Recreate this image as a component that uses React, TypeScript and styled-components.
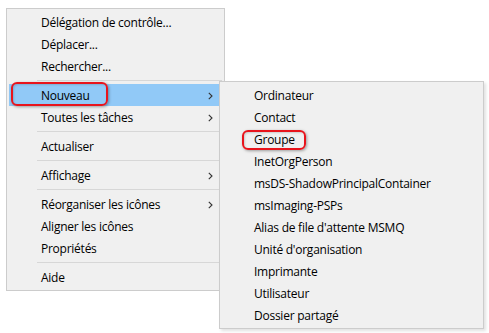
import React from "react";
import styled, { createGlobalStyle } from "styled-components";

const GlobalStyle = createGlobalStyle`
  html, body {
    margin: 0;
    padding: 0;
    background: #ffffff;
  }
  body {
    box-sizing: border-box;
    min-height: 100vh;
    padding: 8px 0 0 6px;
    font-family: "Open Sans", "Noto Sans", "Liberation Sans", sans-serif;
    font-size: 12px;
    color: #000;
  }
`;

const Stage = styled.div`
  position: relative;
  width: 478px;
  min-height: 325px;
`;

const Menu = styled.div<{ $width: number }>`
  width: ${(p) => p.$width}px;
  box-sizing: border-box;
  background: #f0f0f0;
  border: 1px solid #cccccc;
  padding: 2px;
  display: flex;
  flex-direction: column;
`;

const Flyout = styled(Menu)`
  position: absolute;
  left: 213px;
  top: 73px;
  box-shadow: 2px 2px 3px rgba(0, 0, 0, 0.12);
`;

const Item = styled.div<{ $active?: boolean }>`
  position: relative;
  height: 22px;
  display: flex;
  align-items: center;
  justify-content: space-between;
  padding: 0 9px 0 32px;
  background: ${(p) => (p.$active ? "#91c9f7" : "transparent")};
  white-space: nowrap;
  letter-spacing: -0.25px;
  line-height: 22px;
  padding-top: 1px;
  box-sizing: border-box;
`;

const Separator = styled.div`
  height: 7px;
  display: flex;
  align-items: center;
  padding-left: 28px;
  &::after {
    content: "";
    flex: 1;
    height: 1px;
    background: #d7d7d7;
  }
`;

const Callout = styled.span<{ $l: number; $t: number; $w: number; $h: number }>`
  position: absolute;
  left: ${(p) => p.$l}px;
  top: ${(p) => p.$t}px;
  width: ${(p) => p.$w}px;
  height: ${(p) => p.$h}px;
  box-sizing: border-box;
  border: 2px solid #e8141c;
  border-radius: 6px;
  box-shadow: 1px 1px 3px rgba(0, 0, 0, 0.35), inset 1px 1px 2px rgba(0, 0, 0, 0.15);
  pointer-events: none;
`;

const Chevron = () => (
  <svg width="5" height="8" viewBox="0 0 5 8">
    <path d="M0.8 0.8 L4 4 L0.8 7.2" fill="none" stroke="#333" strokeWidth="1.1" />
  </svg>
);

type Entry = { label?: string; sub?: boolean; sep?: boolean };

const mainItems: Entry[] = [
  { label: "Délégation de contrôle..." },
  { label: "Déplacer..." },
  { label: "Rechercher..." },
  { sep: true },
  { label: "Nouveau", sub: true },
  { label: "Toutes les tâches", sub: true },
  { sep: true },
  { label: "Actualiser" },
  { sep: true },
  { label: "Affichage", sub: true },
  { sep: true },
  { label: "Réorganiser les icônes", sub: true },
  { label: "Aligner les icônes" },
  { label: "Propriétés" },
  { sep: true },
  { label: "Aide" },
];

const newItems = [
  "Ordinateur",
  "Contact",
  "Groupe",
  "InetOrgPerson",
  "msDS-ShadowPrincipalContainer",
  "msImaging-PSPs",
  "Alias de file d'attente MSMQ",
  "Unité d'organisation",
  "Imprimante",
  "Utilisateur",
  "Dossier partagé",
];

export default function App() {
  return (
    <>
      <GlobalStyle />
      <Stage>
        <Menu $width={219}>
          {mainItems.map((e, i) =>
            e.sep ? (
              <Separator key={i} />
            ) : (
              <Item key={i} $active={e.label === "Nouveau"}>
                <span>{e.label}</span>
                {e.sub && <Chevron />}
                {e.label === "Nouveau" && <Callout $l={2} $t={-2} $w={97} $h={24} />}
              </Item>
            )
          )}
        </Menu>
        <Flyout $width={265}>
          {newItems.map((label) => (
            <Item key={label}>
              <span>{label}</span>
              {label === "Groupe" && <Callout $l={20} $t={2} $w={64} $h={20} />}
            </Item>
          ))}
        </Flyout>
      </Stage>
    </>
  );
}
